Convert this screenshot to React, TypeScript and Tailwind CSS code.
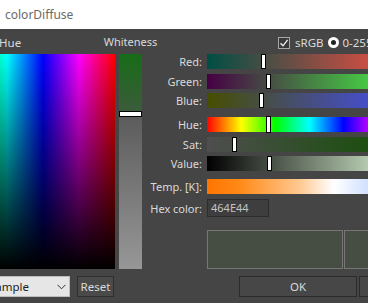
import React from "react";

const font = { fontFamily: '"Noto Sans", "Open Sans", sans-serif' };

function Handle({ left, tall }: { left: number; tall?: boolean }) {
  return (
    <div
      className={
        tall
          ? "absolute top-[-1px] h-[17px] w-[5px] border border-black bg-white"
          : "absolute top-0 h-[15px] w-[5px] border border-black bg-white"
      }
      style={{ left }}
    />
  );
}

function Row({
  label,
  mt,
  children,
}: {
  label: string;
  mt: string;
  children: React.ReactNode;
}) {
  return (
    <div className={`flex items-center ${mt}`}>
      <div className="w-[55px] shrink-0 whitespace-nowrap text-right leading-none">{label}</div>
      <div className="ml-[5px] shrink-0">{children}</div>
    </div>
  );
}

export default function App() {
  return (
    <div
      className="flex h-[303px] w-[368px] flex-col overflow-hidden bg-[#454545] text-[11px] text-[#dadada]"
      style={font}
    >
      <div className="flex h-[29px] shrink-0 items-center bg-white pl-[5px] text-[12px] text-[#6a6a6a]">
        colorDiffuse
      </div>

      <div className="-ml-[101px] flex shrink-0">
        {/* Column A: hue square */}
        <div className="flex w-[216px] shrink-0 flex-col">
          <div className="flex h-[25px] items-center pl-[100px] pt-[2px] text-[11.5px]">Hue</div>
          <div className="h-[215px] w-[216px] bg-[linear-gradient(to_bottom,rgba(0,0,0,0),#000),linear-gradient(to_right,#f00,#ff0,#0f0,#0ff,#00f,#f0f,#f00)]" />
        </div>

        {/* Column B: whiteness */}
        <div className="ml-[4px] flex w-[23px] shrink-0 flex-col">
          <div className="flex h-[25px] items-center justify-center whitespace-nowrap pt-[1px] text-[11px]">
            Whiteness
          </div>
          <div className="flex h-[215px] flex-col">
            <div className="h-[57px] bg-[linear-gradient(to_bottom,#176c17,#3b5c3b)]" />
            <div className="h-[6px] border border-black bg-white" />
            <div className="flex-1 bg-[linear-gradient(to_bottom,#5c5c5c,#979797)]" />
          </div>
        </div>

        {/* Column C: sliders */}
        <div className="ml-[5px] flex shrink-0 flex-col">
          <div className="flex h-[25px] items-center pl-[131px] pt-[2px] text-[11.5px]">
            <div className="flex h-[12px] w-[12px] shrink-0 items-center justify-center border border-[#a8a8a8] bg-[#3a3a3a]">
              <svg width="10" height="10" viewBox="0 0 10 10">
                <path d="M1.5 5.2 L4 7.8 L8.6 1.8" stroke="#f2f2f2" strokeWidth="1.3" fill="none" />
              </svg>
            </div>
            <span className="ml-[5px] shrink-0">sRGB</span>
            <div className="ml-[4px] flex h-[11px] w-[11px] shrink-0 items-center justify-center rounded-full bg-white">
              <div className="h-[5px] w-[5px] rounded-full bg-[#222]" />
            </div>
            <span className="ml-[4px] shrink-0 whitespace-nowrap">0-255</span>
          </div>

          <Row label="Red:" mt="mt-0">
            <div className="relative h-[15px] w-[205px] bg-[linear-gradient(to_right,#004e44,#ff4e44)]">
              <Handle left={54} />
            </div>
          </Row>
          <Row label="Green:" mt="mt-[5px]">
            <div className="relative h-[15px] w-[205px] bg-[linear-gradient(to_right,#460044,#46ff44)]">
              <Handle left={59} />
            </div>
          </Row>
          <Row label="Blue:" mt="mt-[4px]">
            <div className="relative h-[15px] w-[205px] bg-[linear-gradient(to_right,#464e00,#464eff)]">
              <Handle left={52} />
            </div>
          </Row>
          <Row label="Hue:" mt="mt-[9px]">
            <div className="relative h-[15px] w-[205px] bg-[linear-gradient(to_right,#f00,#ff0,#0f0,#0ff,#00f,#f0f,#f00)]">
              <Handle left={59} tall />
            </div>
          </Row>
          <Row label="Sat:" mt="mt-[5px]">
            <div className="relative h-[15px] w-[205px] bg-[linear-gradient(to_right,#4e4e4e,#104e00)]">
              <Handle left={25} />
            </div>
          </Row>
          <Row label="Value:" mt="mt-[4px]">
            <div className="relative h-[15px] w-[205px] bg-[linear-gradient(to_right,#000,#e5ffde)]">
              <Handle left={60} />
            </div>
          </Row>
          <Row label="Temp. [K]:" mt="mt-[8px]">
            <div className="h-[15px] w-[205px] bg-[linear-gradient(to_right,#ff7400_0%,#ff8a18_16%,#ffc890_45%,#fff3e8_58%,#ffffff_62%,#d2e1ff_78%,#adc8ff_100%)]" />
          </Row>
          <Row label="Hex color:" mt="mt-[5px]">
            <div className="flex h-[18px] w-[62px] items-center border border-[#2c2c2c] bg-[#3e3e3e] pl-[3px] text-[#c4c4c4]">
              464E44
            </div>
          </Row>
          <div className="ml-[60px] mt-[13px] flex h-[39px]">
            <div className="w-[136px] shrink-0 border border-[#767676] bg-[#464e44]" />
            <div className="ml-[1px] w-[70px] shrink-0 border border-[#767676] bg-[#464e44]" />
          </div>
        </div>
      </div>

      {/* Bottom row */}
      <div className="-ml-[101px] mt-[7px] flex h-[21px] shrink-0 text-[11.5px]">
        <div className="ml-[81px] flex w-[90px] shrink-0 items-center justify-between border border-[#bdbdbd] bg-[#e6e6e6] pl-[8px] pr-[3px] text-[#1e1e1e]">
          <span>Sample</span>
          <svg width="9" height="6" viewBox="0 0 9 6">
            <path d="M0.5 0.8 L4.5 4.8 L8.5 0.8" stroke="#333" strokeWidth="1" fill="none" />
          </svg>
        </div>
        <div className="ml-[7px] flex w-[37px] shrink-0 items-center justify-center border border-[#2f2f2f] bg-[#4a4a4a]">
          Reset
        </div>
        <div className="ml-[125px] flex w-[118px] shrink-0 items-center justify-center border border-[#2b2b2b] bg-[#474747]">
          OK
        </div>
        <div className="ml-[2px] flex w-[118px] shrink-0 items-center justify-center border border-[#2b2b2b] bg-[#474747]">
          Cancel
        </div>
      </div>
    </div>
  );
}
